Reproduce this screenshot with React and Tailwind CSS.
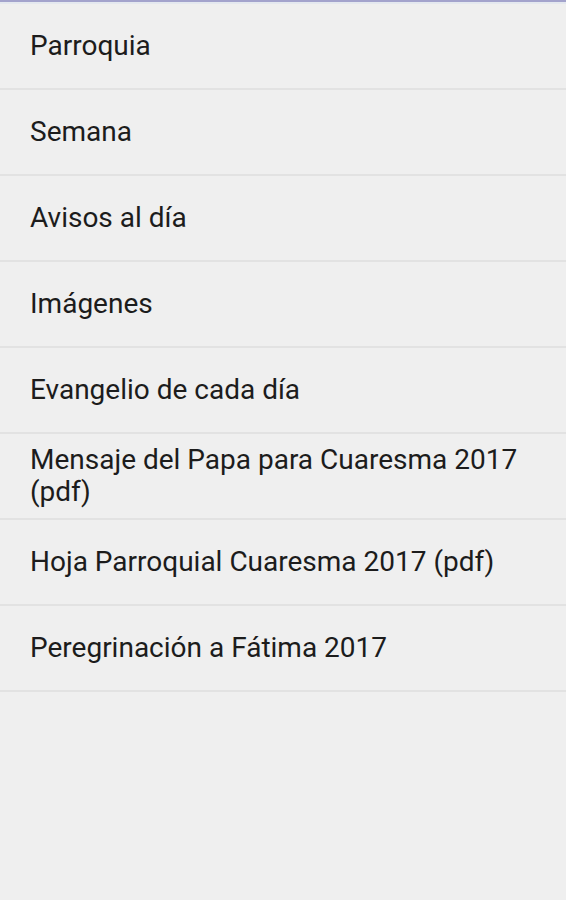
const items = [
  'Parroquia',
  'Semana',
  'Avisos al día',
  'Imágenes',
  'Evangelio de cada día',
  'Mensaje del Papa para Cuaresma 2017 (pdf)',
  'Hoja Parroquial Cuaresma 2017 (pdf)',
  'Peregrinación a Fátima 2017',
]

export default function App() {
  return (
    <div className="min-h-[900px] w-full bg-[#efefef] font-['Roboto',sans-serif]">
      {/* top edge of the action bar */}
      <div className="h-[2px] bg-[#a3a3cc]" />
      <div className="h-[2px] bg-[#e4e8ef]" />
      <ul>
        {items.map((item) => (
          <li
            key={item}
            className="flex h-[86px] items-center border-b-2 border-[#e2e2e2] pl-[30px] pr-6 text-[28px] leading-[32px] text-[#1c1c1c]"
          >
            {item}
          </li>
        ))}
      </ul>
    </div>
  )
}
